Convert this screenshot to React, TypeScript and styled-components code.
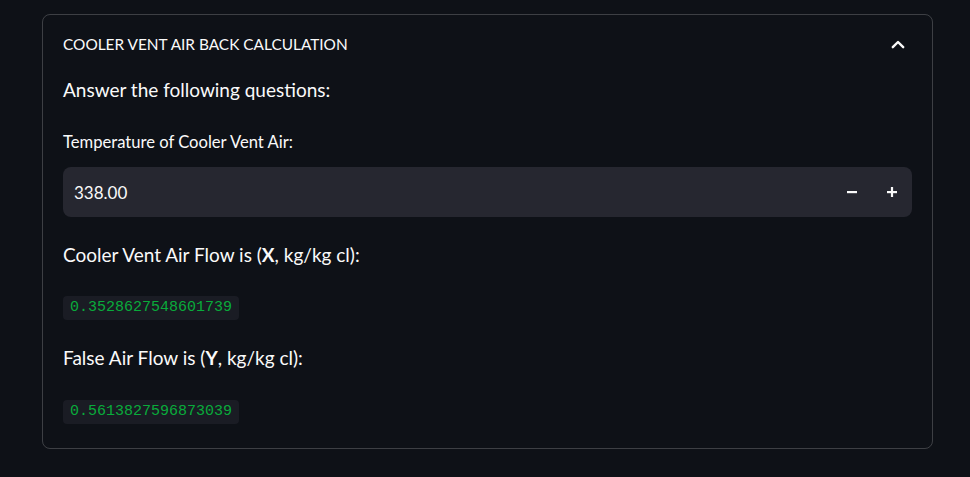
import React from "react";
import styled, { createGlobalStyle } from "styled-components";

const GlobalStyle = createGlobalStyle`
  html, body { margin: 0; padding: 0; background: #0e1117; }
  #root { width: 970px; height: 477px; }
`;

const Page = styled.div`
  box-sizing: border-box;
  width: 970px;
  height: 477px;
  padding: 14px 37px 0 42px;
  background: #0e1117;
  font-family: "Lato", "Open Sans", sans-serif;
  color: #fafafa;
`;

const Expander = styled.section`
  box-sizing: border-box;
  width: 891px;
  height: 435px;
  border: 1px solid rgba(250, 250, 250, 0.2);
  border-radius: 8px;
  display: flex;
  flex-direction: column;
`;

const Header = styled.div`
  height: 58px;
  padding: 0 27px 0 20px;
  display: flex;
  align-items: center;
  justify-content: space-between;
`;

const Title = styled.span`
  font-size: 15.4px;
  color: #fafafa;
  margin-top: -1px;
`;

const Content = styled.div`
  padding: 2px 20px 0;
  display: flex;
  flex-direction: column;
`;

const Text = styled.p<{ $mt?: number }>`
  margin: ${(p) => p.$mt ?? 0}px 0 0;
  font-size: 19px;
  line-height: 30px;
  height: 30px;
`;

const Label = styled.label`
  margin-top: 25px;
  font-size: 16.6px;
  line-height: 24px;
  height: 24px;
`;

const InputBox = styled.div`
  margin-top: 13px;
  height: 50px;
  border-radius: 8px;
  background: #262730;
  display: flex;
  align-items: center;
  padding: 0 0 0 11px;
`;

const Value = styled.span`
  flex: 1;
  font-size: 17px;
`;

const Step = styled.button`
  width: 40px;
  height: 50px;
  border: none;
  background: transparent;
  padding: 0;
  display: flex;
  align-items: center;
  justify-content: center;
  color: #fafafa;
`;

const CodeRow = styled.div<{ $mt: number }>`
  margin-top: ${(p) => p.$mt}px;
  display: flex;
`;

const Code = styled.code`
  height: 24px;
  line-height: 24px;
  padding: 0 7px;
  border-radius: 4px;
  background: #1a1c24;
  color: #09ab3b;
  font-family: "Liberation Mono", monospace;
  font-size: 15px;
`;

const Chevron = () => (
  <svg width="14" height="9" viewBox="0 0 14 9" fill="none" stroke="#fafafa" strokeWidth="2.4" strokeLinecap="round" strokeLinejoin="round">
    <polyline points="1.8 7.2 7 2 12.2 7.2" />
  </svg>
);

const Minus = () => (
  <svg width="12" height="12" viewBox="0 0 12 12">
    <rect x="1" y="5" width="10" height="2.2" fill="#fafafa" />
  </svg>
);

const Plus = () => (
  <svg width="12" height="12" viewBox="0 0 12 12">
    <rect x="1" y="5" width="10" height="2.2" fill="#fafafa" />
    <rect x="4.9" y="1" width="2.2" height="10" fill="#fafafa" />
  </svg>
);

export default function App() {
  return (
    <>
      <GlobalStyle />
      <Page>
        <Expander>
          <Header>
            <Title>COOLER VENT AIR BACK CALCULATION</Title>
            <Chevron />
          </Header>
          <Content>
            <Text>Answer the following questions:</Text>
            <Label>Temperature of Cooler Vent Air:</Label>
            <InputBox>
              <Value>338.00</Value>
              <Step aria-label="decrement"><Minus /></Step>
              <Step aria-label="increment"><Plus /></Step>
            </InputBox>
            <Text $mt={23}>
              Cooler Vent Air Flow is (<b>X</b>, kg/kg cl):
            </Text>
            <CodeRow $mt={26}>
              <Code>0.3528627548601739</Code>
            </CodeRow>
            <Text $mt={23}>
              False Air Flow is (<b>Y</b>, kg/kg cl):
            </Text>
            <CodeRow $mt={27}>
              <Code>0.5613827596873039</Code>
            </CodeRow>
          </Content>
        </Expander>
      </Page>
    </>
  );
}
